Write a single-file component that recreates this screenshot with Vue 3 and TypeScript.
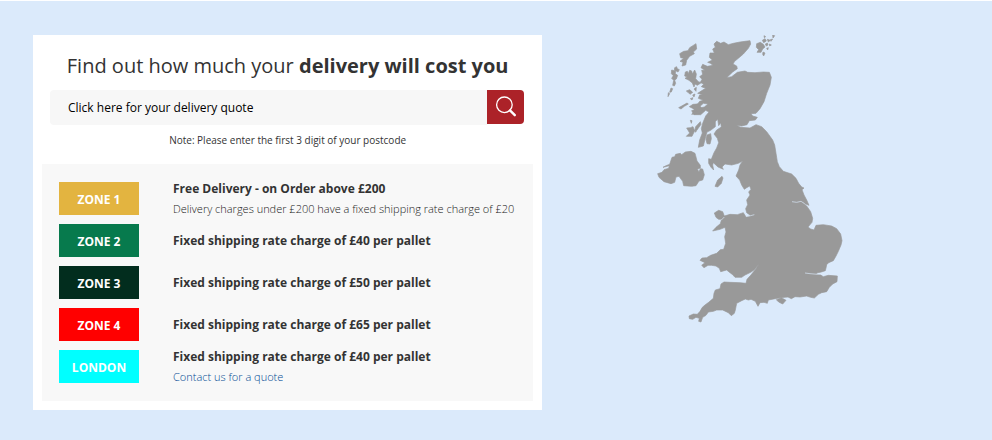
<script setup lang="ts">
import { ref } from 'vue'

interface Zone {
  name: string
  tone: string
  title: string
  note?: string
  link?: string
}

const query = ref('')

const zones: Zone[] = [
  {
    name: 'ZONE 1',
    tone: 'gold',
    title: 'Free Delivery - on Order above £200',
    note: 'Delivery charges under £200 have a fixed shipping rate charge of £20',
  },
  { name: 'ZONE 2', tone: 'green', title: 'Fixed shipping rate charge of £40 per pallet' },
  { name: 'ZONE 3', tone: 'forest', title: 'Fixed shipping rate charge of £50 per pallet' },
  { name: 'ZONE 4', tone: 'red', title: 'Fixed shipping rate charge of £65 per pallet' },
  {
    name: 'LONDON',
    tone: 'cyan',
    title: 'Fixed shipping rate charge of £40 per pallet',
    link: 'Contact us for a quote',
  },
]
</script>

<template>
  <main class="page">
    <section class="card">
      <h1 class="heading">Find out how much your <strong>delivery will cost you</strong></h1>
      <form class="search" @submit.prevent>
        <input
          v-model="query"
          class="field"
          type="text"
          placeholder="Click here for your delivery quote"
          aria-label="Click here for your delivery quote"
          aria-describedby="postcode-note"
        />
        <button class="submit" type="submit" aria-label="Search">
          <svg class="glass" viewBox="0 0 22 22" aria-hidden="true">
            <circle cx="9.4" cy="8.8" r="7.8" fill="none" stroke="#fff" stroke-width="1.3" />
            <path d="M15 14.4L19.8 19.2" stroke="#fff" stroke-width="2.4" stroke-linecap="round" />
          </svg>
        </button>
      </form>
      <p id="postcode-note" class="hint">Note: Please enter the first 3 digit of your postcode</p>

      <ul class="zones">
        <li v-for="zone in zones" :key="zone.name" class="zone">
          <span class="badge" :class="zone.tone">{{ zone.name }}</span>
          <div class="info">
            <p class="title">{{ zone.title }}</p>
            <p v-if="zone.note" class="note">{{ zone.note }}</p>
            <a v-if="zone.link" class="link" href="#contact">{{ zone.link }}</a>
          </div>
        </li>
      </ul>
    </section>

    <div class="map">
      <svg class="uk" viewBox="3 15 600 885" role="img" aria-label="United Kingdom">
        <g class="land">
          <!-- Great Britain -->
          <path
            d="M200 34L212 40L222 36L235 44L250 40L270 36L285 34L300 32L302 42L295 55L280 72L266 84L254 94L249 102L260 108L262 116L248 126L230 143L245 140L262 127L285 123L293 127L315 128L340 126L358 127L364 142L360 165L350 190L342 215L330 236L318 250L303 251L308 258L322 262L316 270L298 272L291 284L275 288L258 286L272 292L300 294L318 284L335 290L350 305L368 330L374 345L378 370L382 395L388 410L400 424L425 432L438 445L446 460L455 471L462 474L456 479L462 495L470 510L477 526L465 521L455 516L470 528L482 545L488 565L486 577L474 591L482 597L492 600L498 586L520 584L545 588L560 596L572 612L576 632L573 645L565 664L558 678L550 692L536 698L530 704L528 714L526 722L514 726L500 729L500 733L512 735L520 740L535 736L562 738L561 755L548 762L538 772L530 785L515 788L505 793L493 804L482 802L470 798L450 801L435 800L424 806L414 801L390 803L376 806L355 810L352 820L342 817L330 818L324 829L316 814L303 808L295 810L286 807L275 812L260 820L256 840L253 850L244 857L235 848L218 840L200 840L190 844L175 846L168 856L158 862L153 876L146 874L148 865L138 862L128 868L118 866L117 858L130 852L142 853L150 844L157 832L165 825L176 817L190 805L192 790L196 780L210 776L213 762L222 756L240 757L270 758L288 760L291 748L302 736L315 720L327 703L312 720L302 727L285 735L275 742L255 742L248 734L240 728L230 720L212 725L208 715L198 708L185 706L174 706L162 713L155 706L165 698L150 691L156 684L170 683L182 676L200 670L211 659L221 658L227 640L224 620L228 606L225 592L210 598L188 603L198 592L211 581L215 568L206 568L198 562L193 549L206 541L218 545L223 558L240 553L262 554L280 548L288 561L303 557L290 548L287 536L293 524L290 510L300 495L296 486L303 478L299 468L290 473L283 478L275 465L269 450L258 438L266 420L270 405L278 393L265 400L245 405L225 402L216 411L220 418L204 411L190 398L188 405L191 420L183 412L176 400L176 386L184 388L192 368L200 354L206 338L202 325L192 312L200 300L214 291L212 278L206 287L203 267L196 275L196 290L182 301L171 306L166 324L160 348L145 352L149 330L157 309L154 296L158 280L167 258L177 246L167 241L152 254L132 254L125 242L145 235L163 231L174 222L160 220L152 227L132 237L118 230L129 223L143 222L149 214L160 211L145 205L149 195L159 194L143 190L157 181L167 175L154 170L161 163L151 157L156 148L149 140L158 133L155 121L165 121L153 113L158 103L172 109L189 106L181 100L173 97L187 90L178 82L180 69L193 69L188 57L196 52L192 42Z"
          />
          <!-- Northern Ireland -->
          <path
            d="M66 382L74 380L77 373L91 370L95 374L106 366L123 364L135 370L137 377L141 393L151 406L151 414L142 418L147 425L151 416L158 417L163 434L158 450L147 453L138 467L125 469L101 467L98 454L87 439L78 441L74 457L63 461L42 455L27 442L23 431L36 427L42 419L56 415L58 407L39 412L48 407L59 403Z"
          />
          <!-- Isle of Man -->
          <path d="M195 469L203 450L216 439L219 444L214 460L203 471Z" />
          <!-- Isle of Wight -->
          <path d="M379 809L394 803L408 811L398 822L386 816Z" />
          <!-- Lewis and Harris -->
          <path
            d="M138 41L140 57L130 66L133 71L119 79L110 91L107 105L96 108L99 97L90 94L101 85L92 83L89 71L101 64L114 62L119 53Z"
          />
          <!-- The Uists and Barra -->
          <path
            d="M74 113L80 110L82 116L88 119L84 126L77 122L76 131L83 136L79 147L74 151L77 160L73 168L68 166L71 151L65 145L70 137L64 131L65 120L73 122ZM63 174L68 176L64 186L59 187ZM55 188L59 191L54 200Z"
          />
          <!-- Skye -->
          <path
            d="M106 126L112 124L115 131L119 121L125 123L127 132L134 120L139 132L137 146L145 155L154 158L142 166L135 162L132 171L127 159L117 151L105 145L112 141L104 138Z"
          />
          <path d="M109 183L119 179L128 187L120 193L114 187ZM132 177L139 172L138 184ZM128 195L135 192L132 201ZM86 233L99 226L111 219L115 222L103 229L93 237ZM121 206L129 203L126 210Z" />
          <!-- Mull -->
          <path
            d="M127 229L142 222L151 229L157 240L149 251L125 253L132 245L143 244L133 239Z"
          />
          <!-- Jura, Islay and Arran -->
          <path
            d="M151 275L153 283L141 300L134 303L137 290ZM110 294L121 293L129 290L134 302L126 319L109 319L119 309ZM171 315L182 311L184 326L180 342L171 341L168 328ZM136 303L140 302L136 307ZM121 271L126 272L124 280Z"
          />
          <!-- Orkney -->
          <path
            d="M320 41L331 37L340 43L345 51L338 57L333 67L321 67L326 59L319 52ZM337 31L345 26L349 33L341 38ZM352 28L361 31L355 36ZM342 17L347 20L343 23ZM368 15L374 17L369 24ZM361 29L368 27L363 34ZM346 42L352 39L354 45L349 48ZM358 42L364 45L359 48ZM339 66L345 69L341 78L338 73ZM350 55L355 53L353 60Z"
          />
        </g>
        <g class="water">
          <path d="M426 515L440 517L453 514L464 521" />
          <path d="M465 729L480 731L503 733L518 730" />
          <path d="M288 560L302 557L313 554" />
          <path d="M214 570L223 561" />
        </g>
      </svg>
    </div>
  </main>
</template>

<style>
body {
  margin: 0;
  background: #dbeafb;
}
</style>

<style scoped>
.page {
  box-sizing: border-box;
  min-height: 100vh;
  display: grid;
  grid-template-columns: 11fr 9fr;
  align-items: start;
  padding: 34px 33px 30px;
  border-top: 1px solid #fff;
  background: #dbeafb;
  color: #333;
  font-family: 'Open Sans', 'Noto Sans', sans-serif;
}

.card {
  padding: 16px 9px 9px;
  background: #fff;
}

.heading {
  margin: 0 0 9px;
  font-size: 20px;
  line-height: 30px;
  font-weight: 400;
  text-align: center;
}

.heading strong {
  font-weight: 700;
}

.search {
  display: flex;
  margin: 0 9px 0 8px;
}

.field {
  flex: 1;
  min-width: 0;
  box-sizing: border-box;
  height: 35px;
  padding: 0 18px;
  border: 0;
  border-radius: 4px 0 0 4px;
  background: #f7f7f7;
  color: #000;
  font-family: inherit;
  font-size: 12px;
}

.field::placeholder {
  color: #000;
  opacity: 1;
}

.submit {
  display: flex;
  align-items: center;
  justify-content: center;
  width: 37px;
  height: 34px;
  padding: 0;
  border: 0;
  border-radius: 0 4px 4px 0;
  background: #ac2228;
  cursor: pointer;
}

.glass {
  width: 22px;
  height: 22px;
}

.hint {
  margin: 6px 0 14px;
  font-size: 10px;
  line-height: 19px;
  text-align: center;
}

.zones {
  display: flex;
  flex-direction: column;
  gap: 9px;
  margin: 0;
  padding: 18px 17px;
  list-style: none;
  background: #f8f8f8;
}

.zone {
  display: flex;
  align-items: center;
  gap: 34px;
  height: 33px;
}

.badge {
  flex: none;
  box-sizing: border-box;
  width: 80px;
  height: 33px;
  padding-top: 1px;
  color: #fff;
  font-size: 12px;
  line-height: 33px;
  font-weight: 700;
  text-align: center;
}

.gold {
  background: #e3b440;
}

.green {
  background: #077a4d;
}

.forest {
  background: #022d1e;
}

.red {
  background: #f00;
}

.cyan {
  background: #0ff;
}

.info {
  font-size: 12px;
  line-height: 20px;
}

.title,
.note {
  margin: 0;
}

.title {
  font-weight: 700;
}

.note,
.link {
  display: block;
  color: #222;
  font-size: 11px;
  font-weight: 300;
}

.link {
  color: #004a94;
  text-decoration: none;
}

.map {
  display: flex;
  justify-content: center;
}

.uk {
  width: 200px;
  height: auto;
}

.land {
  fill: #999;
  stroke: #999;
  stroke-width: 2;
  stroke-linejoin: round;
}

.water {
  fill: none;
  stroke: #dbeafb;
  stroke-width: 2;
}
</style>
